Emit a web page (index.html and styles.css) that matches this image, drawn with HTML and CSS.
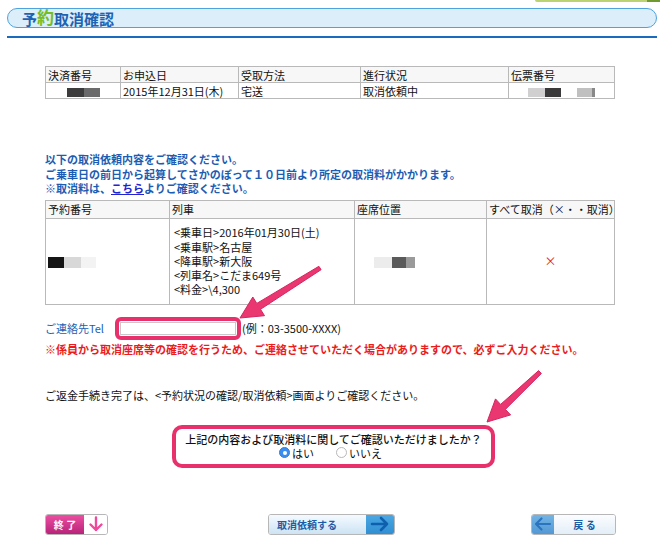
FILE: index.html
```html
<!DOCTYPE html>
<html lang="ja">
<head>
<meta charset="utf-8">
<title>予約取消確認</title>
<link rel="stylesheet" href="styles.css">
</head>
<body>
<div class="page">
  <div class="topbar"><div class="greentab"></div></div>
  <div class="banner">
    <h1 class="title"><span>予</span><span class="g">約</span><span>取消確認</span></h1>
  </div>
  <div class="rule"></div>

  <main class="content">
    <table class="t1">
      <colgroup><col class="c1"><col class="c2"><col class="c3"><col class="c4"><col class="c5"></colgroup>
      <tr class="hd"><th>決済番号</th><th>お申込日</th><th>受取方法</th><th>進行状況</th><th>伝票番号</th></tr>
      <tr>
        <td class="center"><span class="blur"><i class="k3c w17"></i><i class="k6a w16"></i></span></td>
        <td>2015年12月31日(木)</td>
        <td>宅送</td>
        <td>取消依頼中</td>
        <td class="center"><span class="blur"><i class="kd0 w17"></i><i class="k3a w16"></i><i class="kff w16"></i><i class="kc0 w15"></i><i class="k88 w3"></i></span></td>
      </tr>
    </table>

    <div class="note">
      <p>以下の取消依頼内容をご確認ください。</p>
      <p>ご乗車日の前日から起算してさかのぼって１０日前より所定の取消料がかかります。</p>
      <p>※取消料は、<a class="link" href="#">こちら</a>よりご確認ください。</p>
    </div>

    <table class="t2">
      <colgroup><col class="d1"><col class="d2"><col class="d3"><col class="d4"></colgroup>
      <tr class="hd"><th>予約番号</th><th>列車</th><th>座席位置</th><th>すべて取消（×・・取消）</th></tr>
      <tr class="body">
        <td><span class="blur tall"><i class="k15 w16"></i><i class="kd8 w17"></i><i class="kf3 w15"></i></span></td>
        <td class="train">
          <p>&lt;乗車日&gt;2016年01月30日(土)</p>
          <p>&lt;乗車駅&gt;名古屋</p>
          <p>&lt;降車駅&gt;新大阪</p>
          <p>&lt;列車名&gt;こだま649号</p>
          <p>&lt;料金&gt;\4,300</p>
        </td>
        <td class="seat"><span class="blur tall"><i class="kec w18"></i><i class="k5a w14"></i><i class="k9a w9"></i></span></td>
        <td class="center"><span class="cross">×</span></td>
      </tr>
    </table>

    <div class="tel">
      <span class="tel-label">ご連絡先Tel</span>
      <span class="hl"><span class="input"></span></span>
      <span class="example">(例：03-3500-XXXX)</span>
    </div>
    <p class="warn">※係員から取消座席等の確認を行うため、ご連絡させていただく場合がありますので、必ずご入力ください。</p>

    <p class="refund">ご返金手続き完了は、&lt;予約状況の確認/取消依頼&gt;画面よりご確認ください。</p>

    <div class="confirm">
      <p class="question">上記の内容および取消料に関してご確認いただけましたか？</p>
      <div class="radios">
        <span class="opt"><span class="radio on"></span>はい</span>
        <span class="opt"><span class="radio"></span>いいえ</span>
      </div>
    </div>
  </main>

  <div class="buttons">
    <div class="btn btn-end">
      <span class="end-label">終 了</span>
      <span class="end-icon">
        <svg width="16" height="16" viewBox="0 0 16 16"><path d="M8 1.5V14M2.5 8.5L8 14l5.5-5.5" fill="none" stroke="#f0489a" stroke-width="2.4" stroke-linecap="round" stroke-linejoin="round"/></svg>
      </span>
    </div>
    <div class="btn btn-go">
      <span class="go-label">取消依頼する</span>
      <span class="go-icon">
        <svg width="20" height="16" viewBox="0 0 20 16"><path d="M2 8h15M11 2l6 6-6 6" fill="none" stroke="#0e5fae" stroke-width="2.6" stroke-linecap="round" stroke-linejoin="round"/></svg>
      </span>
    </div>
    <div class="btn btn-back">
      <span class="back-icon">
        <svg width="18" height="16" viewBox="0 0 18 16"><path d="M16 8H2M7.5 2.5L2 8l5.5 5.5" fill="none" stroke="#2b74c0" stroke-width="2.2" stroke-linecap="round" stroke-linejoin="round"/></svg>
      </span>
      <span class="back-label">戻 る</span>
    </div>
  </div>

  <svg class="annot" width="660" height="540" viewBox="0 0 660 540">
    <polygon points="318.9,266.3 256.8,303.4 252.8,297.0 240,318 264.5,315.7 260.5,309.3 321.1,269.7" fill="#ea3671" stroke="#d42660" stroke-width="1" stroke-linejoin="round"/>
    <polygon points="538.6,370.6 500.6,404.4 495.5,398.9 487,422 510.6,414.9 505.4,409.4 541.4,373.5" fill="#ea3671" stroke="#d42660" stroke-width="1" stroke-linejoin="round"/>
  </svg>
</div>
</body>
</html>
```

FILE: styles.css
```css
* { box-sizing: border-box; }
html, body { margin: 0; padding: 0; background: #ffffff; }
body {
  font-family: "Noto Sans CJK JP", "Noto Sans", "Liberation Sans", sans-serif;
  font-size: 11px;
  color: #111;
}
p { margin: 0; }
.page { position: relative; width: 660px; height: 540px; overflow: hidden; }

.topbar { height: 2px; display: flex; justify-content: flex-end; }
.greentab {
  width: 125px; height: 2px;
  background: linear-gradient(90deg, #b9d470 0, #b9d470 90%, #6f9a30 90%);
  border-bottom-left-radius: 3px;
}

.banner {
  margin: 6px 3px 0 7px;
  height: 20px;
  border: 1px solid #4ea3dc;
  border-radius: 10px;
  background: #dbeefa;
  display: flex; align-items: center;
  padding-left: 14px;
}
.title {
  margin: 0;
  font-size: 15px; font-weight: 700;
  line-height: 16px;
  color: #1d62b3;
  letter-spacing: 0;
  white-space: nowrap;
}
.title .g { color: #76bd25; font-size: 17px; position: relative; top: -1px; }

.rule { margin: 8px 3px 0 7px; height: 2px; background: #1a6bbf; }

.content { padding-left: 45px; }

table { border-collapse: collapse; table-layout: fixed; width: 569px; }
th, td {
  border: 1px solid #b9b9b9;
  padding: 0 2px;
  font-weight: 400;
  text-align: left;
  white-space: nowrap;
  line-height: 14px;
}
.hd th { background: #f7f7f7; }
.center { text-align: center; }

.t1 { margin-top: 28px; }
.t1 .c1 { width: 75px; } .t1 .c2 { width: 118px; } .t1 .c3 { width: 122px; }
.t1 .c4 { width: 148px; } .t1 .c5 { width: 106px; }
.t1 tr { height: 16px; }

.blur { display: inline-flex; vertical-align: middle; height: 9px; }
.blur.tall { height: 11px; }
.blur i { display: block; height: 100%; }
.w3 { width: 3px; } .w9 { width: 9px; } .w14 { width: 14px; } .w15 { width: 15px; }
.w16 { width: 16px; } .w17 { width: 17px; } .w18 { width: 18px; }
.k15 { background: #151515; } .k3a { background: #3a3a3a; } .k3c { background: #3c3c3c; }
.k5a { background: #5a5a5a; } .k6a { background: #6a6a6a; } .k88 { background: #888; }
.k9a { background: #9a9a9a; } .kc0 { background: #c0c0c0; } .kd0 { background: #d0d0d0; }
.kd8 { background: #d8d8d8; } .kec { background: #ececec; } .kf3 { background: #f3f3f3; }
.kff { background: #fff; }

.note {
  margin-top: 53px;
  color: #1c5db3;
  font-weight: 700;
  line-height: 14.5px;
}
.link { color: #2323d0; text-decoration: underline; }

.t2 { margin-top: 4px; }
.t2 .d1 { width: 124px; } .t2 .d2 { width: 185px; } .t2 .d3 { width: 132px; } .t2 .d4 { width: 128px; }
.t2 .hd { height: 18px; }
.t2 .body { height: 86px; }
.train { padding-left: 4px; line-height: 14.3px; }
.seat { padding-left: 19px; }
.cross { color: #e52020; font-size: 12px; }

.tel { display: flex; align-items: center; margin-top: 12px; height: 23px; }
.tel-label { width: 70px; color: #1c5db3; }
.hl {
  display: block; width: 126px; height: 23px;
  border: 4px solid #e8306c; border-radius: 6px;
  padding: 1px 1px;
}
.input { display: block; width: 100%; height: 100%; border: 1px solid #c9c9c9; background: #fff; }
.example { margin-left: 1px; }

.warn { margin-top: 2px; color: #ea1c1c; font-weight: 700; line-height: 14px; }

.refund { margin-top: 32px; line-height: 14px; }

.confirm {
  margin: 23px 0 0 127px;
  width: 323px; height: 43px;
  border: 4px solid #e8306c; border-radius: 10px;
  display: flex; flex-direction: column; align-items: center;
  padding-top: 3px;
}
.question { line-height: 14px; color: #111; font-weight: 500; }
.radios { display: flex; gap: 22px; line-height: 14px; margin-right: 6px; }
.opt { display: inline-flex; align-items: center; gap: 2px; }
.radio {
  width: 11px; height: 11px; border-radius: 50%;
  border: 1px solid #b8b8b8; background: #fff;
  display: inline-flex; align-items: center; justify-content: center;
}
.radio.on { background: #3a8ef0; border-color: #2f7fe0; }
.radio.on::after { content: ""; width: 4px; height: 4px; border-radius: 50%; background: #fff; }

.buttons { display: flex; margin-top: 46px; padding-left: 45px; }
.btn {
  display: flex; height: 21px;
  border: 1px solid #b7b7b7; border-radius: 3px;
  overflow: hidden;
  font-weight: 700; font-size: 10px;
}
.btn-end { width: 63px; }
.end-label {
  width: 38px; display: flex; align-items: center; justify-content: center;
  color: #fff; background: linear-gradient(#ec4ea2, #b82379);
}
.end-icon { flex: 1; display: flex; align-items: center; justify-content: center; background: #fff; }
.btn-go { width: 127px; margin-left: 160px; }
.go-label {
  width: 97px; display: flex; align-items: center; padding-left: 8px;
  color: #1b5ca8; background: linear-gradient(#f5fafe, #cde3f4);
}
.go-icon { flex: 1; display: flex; align-items: center; justify-content: center; background: linear-gradient(#4ba8e4, #318ed1); }
.btn-back { width: 85px; margin-left: 136px; }
.back-icon { width: 22px; display: flex; align-items: center; justify-content: center; background: linear-gradient(#72b4e4, #5398d4); }
.back-label {
  flex: 1; display: flex; align-items: center; justify-content: center;
  color: #1b5ca8; background: linear-gradient(#fbfdff, #e3eef7);
}

.annot { position: absolute; left: 0; top: 0; pointer-events: none; }
```
